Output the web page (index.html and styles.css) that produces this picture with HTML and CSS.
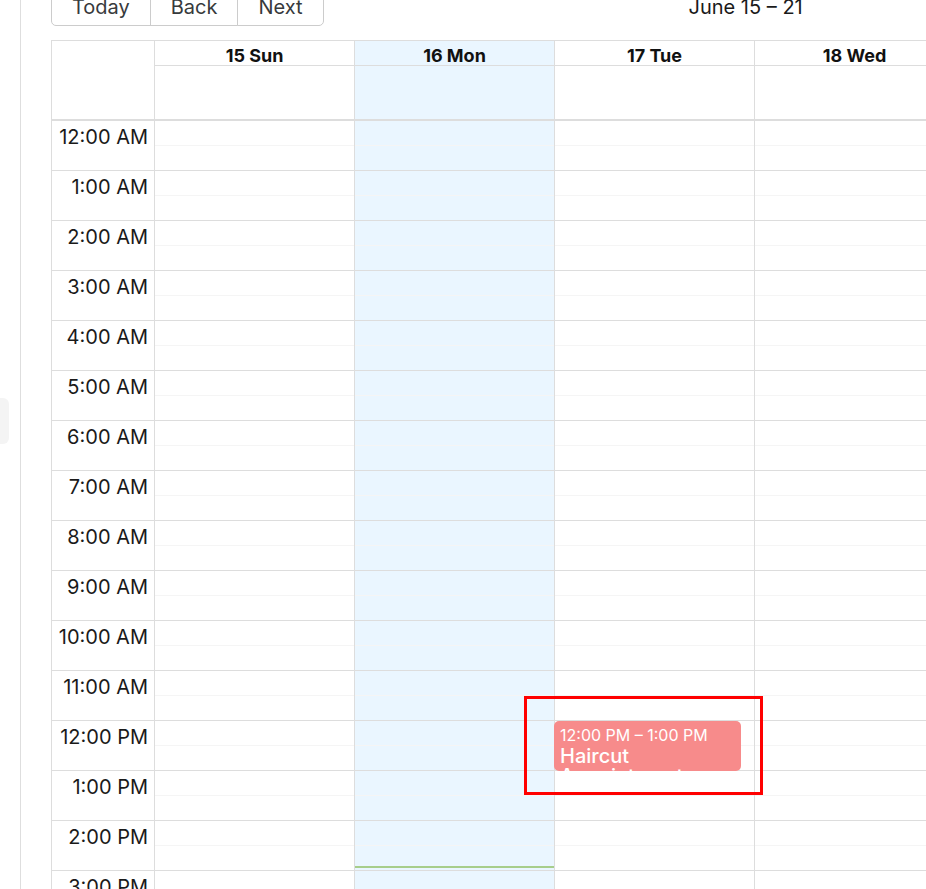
FILE: index.html
```html
<!DOCTYPE html>
<html>
<head>
<meta charset="utf-8">
<link rel="stylesheet" href="styles.css">
</head>
<body>
<div class="layout">
  <div class="rail"><div class="rail-box"></div></div>
  <div class="main">
    <div class="toolbar">
      <div class="btn-group">
        <button class="btn first">Today</button>
        <button class="btn">Back</button>
        <button class="btn last">Next</button>
      </div>
      <div class="label">June 15 – 21</div>
    </div>
    <div class="cal">
      <div class="time-header">
        <div class="header-gutter"></div>
        <div class="hcol"><div class="hcell">15 Sun</div><div class="allday"></div></div>
        <div class="hcol today"><div class="hcell">16 Mon</div><div class="allday"></div></div>
        <div class="hcol"><div class="hcell">17 Tue</div><div class="allday"></div></div>
        <div class="hcol"><div class="hcell">18 Wed</div><div class="allday"></div></div>
        <div class="hcol"><div class="hcell">19 Thu</div><div class="allday"></div></div>
        <div class="hcol"><div class="hcell">20 Fri</div><div class="allday"></div></div>
        <div class="hcol"><div class="hcell">21 Sat</div><div class="allday"></div></div>
      </div>
      <div class="time-content">
        <div class="gutter" id="gutter"></div>
        <div class="day" data-day="0"></div>
        <div class="day today" data-day="1"><div class="now"></div></div>
        <div class="day" data-day="2">
          <div class="event">
            <div class="event-label">12:00 PM – 1:00 PM</div>
            <div class="event-content">Haircut Appointment</div>
          </div>
        </div>
        <div class="day" data-day="3"></div>
        <div class="day" data-day="4"></div>
        <div class="day" data-day="5"></div>
        <div class="day" data-day="6"></div>
      </div>
    </div>
  </div>
</div>
<div class="annot"></div>
<script>
(function(){
  var g = document.getElementById('gutter');
  for (var h = 0; h < 24; h++) {
    var hh = h % 12 === 0 ? 12 : h % 12;
    var t = hh + ':00 ' + (h < 12 ? 'AM' : 'PM');
    var d = document.createElement('div');
    d.className = 'ggroup';
    d.innerHTML = '<div class="glabel">' + t + '</div>';
    g.appendChild(d);
  }
  var days = document.querySelectorAll('.day');
  for (var i = 0; i < days.length; i++) {
    for (var k = 0; k < 24; k++) {
      var s = document.createElement('div');
      s.className = 'group';
      s.innerHTML = '<div class="slot"></div><div class="slot half"></div>';
      days[i].appendChild(s);
    }
  }
})();
</script>
</body>
</html>
```
FILE: styles.css
```css
html, body {
  margin: 0;
  padding: 0;
}
body {
  width: 926px;
  height: 889px;
  overflow: hidden;
  font-family: Inter, "Noto Sans", sans-serif;
  background: #fff;
  color: #1a1a1a;
  position: relative;
}
* { box-sizing: border-box; }

.layout {
  display: flex;
  height: 889px;
}
.rail {
  width: 21px;
  flex: none;
  border-right: 1px solid #dedede;
  padding-top: 398px;
}
.rail-box {
  width: 9px;
  height: 46px;
  background: #f4f4f4;
  border-radius: 0 6px 6px 0;
}
.main {
  flex: none;
  width: 1560px;
  padding-left: 30px;
}

.toolbar {
  display: flex;
  align-items: center;
  height: 38px;
  margin-top: -12px;
  margin-bottom: 14px;
  font-size: 20px;
  color: #373a3c;
}
.btn-group {
  display: flex;
}
.btn {
  font-family: Inter, "Noto Sans", sans-serif;
  font-size: 20px;
  color: #373a3c;
  background: #fff;
  border: 1px solid #ccc;
  height: 38px;
  padding: 0 20px;
  margin: 0 0 0 -1px;
  border-radius: 0;
}
.btn.first {
  margin-left: 0;
  border-radius: 5px 0 0 5px;
}
.btn.last {
  border-radius: 0 5px 5px 0;
}
.label {
  width: 844px;
  text-align: center;
  color: #1a1a1a;
}

.cal {
  border: 1px solid #ddd;
  width: 1505px;
}
.time-header {
  display: flex;
  height: 80px;
  border-bottom: 2px solid #ddd;
}
.header-gutter {
  width: 103px;
  flex: none;
  border-right: 1px solid #ddd;
}
.hcol {
  width: 200px;
  flex: none;
  border-right: 1px solid #ddd;
  display: flex;
  flex-direction: column;
}
.hcol.today { background: #eaf6ff; }
.hcell {
  height: 25px;
  border-bottom: 1px solid #ddd;
  text-align: center;
  font-weight: 700;
  font-size: 18px;
  padding-top: 3px;
  line-height: 24px;
  color: #111;
  overflow: visible;
}
.allday { flex: 1; }

.time-content {
  display: flex;
}
.gutter {
  width: 103px;
  flex: none;
  border-right: 1px solid #ddd;
}
.ggroup {
  height: 50px;
  border-bottom: 1px solid #ddd;
}
.glabel {
  text-align: right;
  padding: 0 6px 0 0;
  font-size: 20px;
  line-height: 32px;
  color: #1a1a1a;
}
.day {
  width: 200px;
  flex: none;
  border-right: 1px solid #ddd;
  position: relative;
}
.day.today { background: #eaf6ff; }
.group {
  height: 50px;
  border-bottom: 1px solid #ddd;
  display: flex;
  flex-direction: column;
}
.slot { flex: 1; }
.slot.half { border-top: 1px solid #f5f5f5; }

.event {
  position: absolute;
  top: 600px;
  left: -1px;
  width: 187px;
  height: 50px;
  background: #f78b8b;
  border-radius: 5px;
  padding: 4px 6px;
  color: #fff;
  overflow: hidden;
  z-index: 2;
}
.event-label {
  font-size: 16px;
  line-height: 21px;
}
.event-content {
  font-size: 20px;
  line-height: 20px;
  font-weight: 500;
}
.now {
  position: absolute;
  top: 745px;
  left: 0;
  right: 0;
  height: 2px;
  background: #a7ce8c;
  z-index: 3;
}

.annot {
  position: absolute;
  left: 524px;
  top: 696px;
  width: 239px;
  height: 99px;
  border: 3px solid #f00;
  z-index: 10;
}
```
